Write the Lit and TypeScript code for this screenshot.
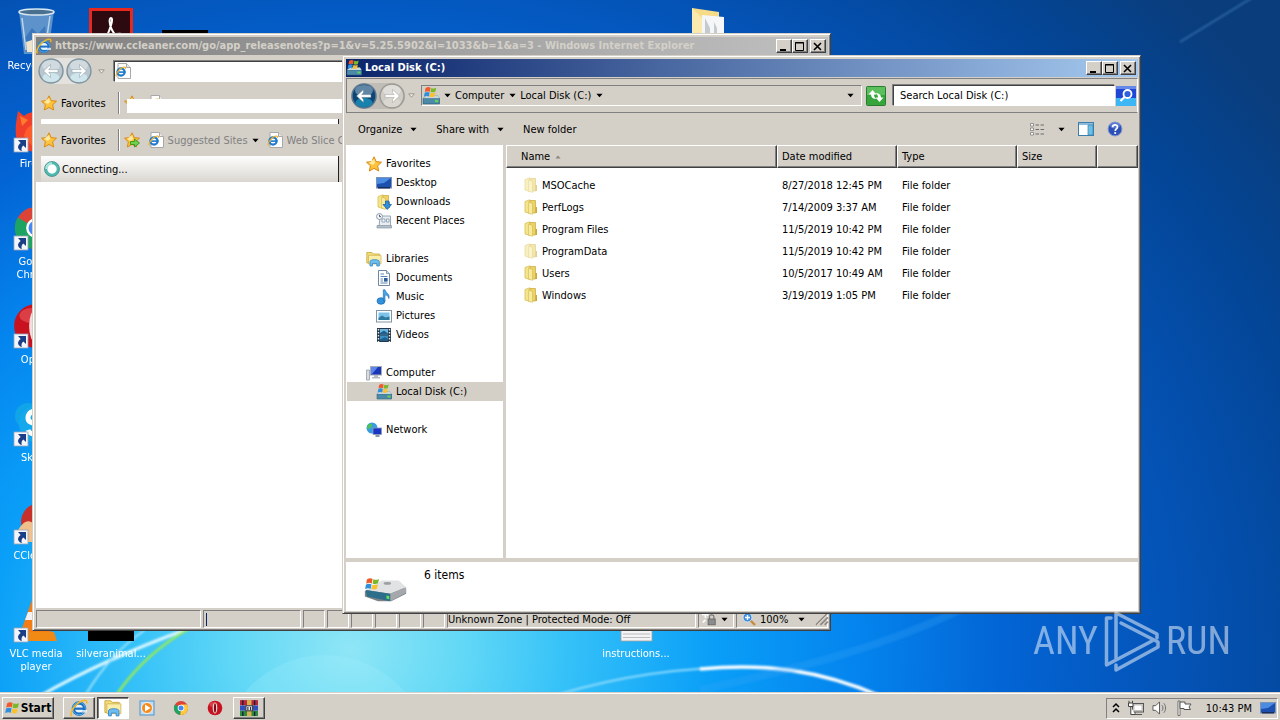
import { LitElement, html, css, svg, TemplateResult } from "lit";
import { customElement, property } from "lit/decorators.js";

/* ---------- icon library ---------- */

const flag = svg`
  <path d="M2 3.500C4 2 6 2 7.600 3L6.800 7.500C5.200 6.600 3.400 6.600 1.300 7.800Z" fill="#f0592a"/>
  <path d="M8.400 3.300C10.400 4.200 12.200 4 14 3L13 7.400C11.200 8.300 9.500 8.400 7.600 7.700Z" fill="#7ab829"/>
  <path d="M1.100 8.600C3.100 7.400 5 7.400 6.600 8.400L5.700 12.800C4.200 11.900 2.300 11.900 0.200 13Z" fill="#2f8fdd"/>
  <path d="M7.400 8.600C9.300 9.400 11 9.300 12.900 8.300L11.900 12.700C10.100 13.600 8.400 13.700 6.500 13Z" fill="#fbc02d"/>`;

const ie = svg`
  <circle cx="8" cy="8.500" r="5" fill="#e4f3fc" stroke="#1f6fc4" stroke-width="3"/>
  <circle cx="8" cy="8.500" r="5.600" fill="none" stroke="#58b8f0" stroke-width=".8"/>
  <rect x="4" y="7.600" width="9.500" height="2" fill="#1f6fc4"/>
  <path d="M9.500 9.800H15V12H9.500Z" fill="#fff" opacity=".7"/>
  <path d="M1.500 15.200C-1 13 4 4.500 10.500 1.800C13.500 .5 15.600 1 14.600 4" fill="none" stroke="#f4b824" stroke-width="1.400"/>`;

const pageIe = svg`
  <path d="M3 .5H11.500L15.500 4.500V15.500H3Z" fill="#fff" stroke="#a8a8a8"/>
  <path d="M11.500 .5V4.500H15.500" fill="#e8e8e8" stroke="#a8a8a8"/>
  <circle cx="6" cy="9" r="3.600" fill="none" stroke="#1f78cc" stroke-width="2.200"/>
  <rect x="4" y="8.300" width="6.500" height="1.600" fill="#1f78cc"/>
  <path d="M1.500 13.500C0 12 3.500 6 8 4.300C10 3.600 11 4.300 10.300 5.800" fill="none" stroke="#f0b020" stroke-width="1.200"/>`;

const star = svg`<path d="M8 .8L10.200 5.600L15.500 6.200L11.600 9.800L12.700 15L8 12.400L3.300 15L4.400 9.800L.5 6.200L5.800 5.600Z" fill="#fdc33c" stroke="#d98a16"/>
  <path d="M8 3L9.200 6.700L7 9L3 7Z" fill="#ffe9a0"/>`;

const folder = svg`
  <path d="M2 2.500L7 .8V14.500L2 13Z" fill="#f5e48c" stroke="#d8bf56" stroke-width=".8"/>
  <path d="M7 1.500H12.500V14H7Z" fill="#ecd264" stroke="#cdb048" stroke-width=".8"/>
  <path d="M5.500 3L9.500 4.500V15.300L5.500 14.300Z" fill="#f7ea9e" stroke="#d4ba50" stroke-width=".6"/>
  <path d="M12.500 8H14V14H12.500Z" fill="#c9a93c"/>`;

const disk = svg`
  <path d="M1 10L4 7.500H14L15.500 10V15H1Z" fill="#3f7f9e"/>
  <path d="M1 10H15.500V15H1Z" fill="#4d8aa8" stroke="#2f6480" stroke-width=".6"/>
  <path d="M4 7.500H14L15.500 10H1Z" fill="#c9d6dc"/>
  <rect x="11.500" y="11.500" width="3" height="2" fill="#5fd35a"/>
  <g transform="translate(1.500 -1.800) scale(.8)">${flag}</g>`;

const monitor = svg`
  <rect x=".5" y="2.500" width="15" height="10.500" fill="#1c4fae" stroke="#7c93b8"/>
  <path d="M1 3H15L8 8L1 9Z" fill="#4b8be2"/>
  <rect x="2" y="12" width="12" height="1.500" fill="#1c2e55"/>`;

const library = svg`
  <path d="M.8 1.500H6L7.500 3H13.500V12H.8Z" fill="#f3dc7a" stroke="#c9a73c" stroke-width=".8"/>
  <path d="M2.500 4.300H15V13H2.500Z" fill="#fbeea8" stroke="#d0b04c" stroke-width=".7"/>
  <path d="M4 15V10.500C4 8 13.300 8 13.300 10.500V15H10.800V12.500H6.500V15Z" fill="#6fbdf0" stroke="#3486c6" stroke-width=".8"/>`;

const chrome = svg`
  <circle cx="8" cy="8" r="7" fill="#db4437"/>
  <path d="M8 8L1.900 4.500A7 7 0 0 0 7.300 15Z" fill="#1da362"/>
  <path d="M8 8H15A7 7 0 0 1 7.300 15Z" fill="#fcca3f"/>
  <path d="M8 8L15 8A7 7 0 0 0 14 4.600H8Z" fill="#fcca3f"/>
  <circle cx="8" cy="8" r="3.300" fill="#fff"/><circle cx="8" cy="8" r="2.500" fill="#4587f3"/>`;

const opera = svg`
  <circle cx="8" cy="8" r="7.300" fill="#c81220"/>
  <ellipse cx="6.500" cy="4.500" rx="4" ry="2.500" fill="#ee6a6a" opacity=".5"/>
  <ellipse cx="8" cy="8" rx="2.300" ry="5.600" fill="#f4dede"/>
  <ellipse cx="8" cy="8" rx="1.100" ry="4.800" fill="#7a0a12"/>`;

const shortcut = svg`
  <rect x="2" y="32" width="14" height="14" fill="#f2f5fa" stroke="#9aa6b8" stroke-width=".8"/>
  <path d="M6 34H14V42L11.300 39.600C9.300 41 9.300 43 9.800 45C5.300 43.500 4.800 39.500 8.700 36.900Z" fill="#1b3f86"/>`;

const circleArrow = (fill: string, low: string, ring: string, dir: "l" | "r") => svg`
  <circle cx="13" cy="13" r="12" fill="${fill}" stroke="${ring}" stroke-width="1.500"/>
  <ellipse cx="13" cy="19.500" rx="8.500" ry="4.500" fill="${low}" opacity=".7"/>
  <ellipse cx="13" cy="7.500" rx="9" ry="5.500" fill="#fff" opacity=".35"/>
  <g transform="${dir === "r" ? "translate(26 0) scale(-1 1)" : ""}">
    <path d="M5.500 13L12.500 6.500V9.500L10.800 11.600H20V14.400H10.800L12.500 16.500V19.500Z" fill="#fff" stroke="${ring}" stroke-width=".5"/></g>`;

const I: Record<string, [string, TemplateResult]> = {
  flag: ["0 0 16 16", flag as any],
  ie: ["0 0 16 16", ie as any],
  pageIe: ["0 0 16 16", pageIe as any],
  star: ["0 0 16 16", star as any],
  starAdd: ["0 0 16 16", svg`${star}<path d="M6.500 9.500H10.500V7L15.500 11L10.500 15V12.500H6.500Z" fill="#6fd04a" stroke="#2b8a1c" stroke-width=".8"/>` as any],
  folder: ["0 0 16 16", folder as any],
  disk: ["0 0 16 16", disk as any],
  monitor: ["0 0 16 16", monitor as any],
  library: ["0 0 16 16", library as any],
  chrome: ["0 0 16 16", chrome as any],
  opera: ["0 0 16 16", opera as any],
  downloads: ["0 0 16 16", svg`${folder}<path d="M9.500 7H13V10.500H15.500L11.300 15.500L7 10.500H9.500Z" fill="#2f8fe0" stroke="#14599c" stroke-width=".7"/>` as any],
  recent: ["0 0 16 16", svg`
    <path d="M4 3H14.500V14.500H3Z" fill="#e8edf2" stroke="#8494a4" stroke-width=".8"/>
    <path d="M6 6H9V9H6ZM10.500 6H13V9H10.500Z" fill="#fff" stroke="#7d93a8" stroke-width=".8"/>
    <path d="M1 12.500H15.500V15H1Z" fill="#b4c0cc" stroke="#7b8a98" stroke-width=".6"/>
    <circle cx="3.500" cy="3.500" r="3" fill="#f4f8fb" stroke="#8494a4" stroke-width=".9"/><path d="M3.500 1.800V3.700H5" fill="none" stroke="#556"/>` as any],
  documents: ["0 0 16 16", svg`
    <path d="M2.500 .5H10.500L13.500 3.500V15.500H2.500Z" fill="#fff" stroke="#6f87a4"/>
    <path d="M10.500 .5V3.500H13.500" fill="#cfdcea" stroke="#6f87a4" stroke-width=".8"/>
    <path d="M4.500 4H8M4.500 6.500H11.500M4.500 9H7M4.500 11H7M4.500 13H11.500" stroke="#5d86b8"/>
    <rect x="8" y="8" width="3.600" height="3.600" fill="#2c5c9c"/>` as any],
  music: ["0 0 16 16", svg`
    <ellipse cx="5" cy="12" rx="4" ry="3.300" fill="#2f93dd" stroke="#1b66a8" stroke-width=".7"/>
    <path d="M7.300 12V.8H9C9.500 4 14.500 4.800 12.800 9.500C12.500 6.800 10.500 6 9 5.800V12Z" fill="#47a6e8" stroke="#1b66a8" stroke-width=".6"/>` as any],
  pictures: ["0 0 16 16", svg`
    <rect x=".5" y="2.500" width="15" height="11.500" fill="#fff" stroke="#7f95aa"/>
    <rect x="2.500" y="4.500" width="11" height="7.500" fill="#7cc3ea"/><path d="M2.500 10L6 7.500L9.500 9.500L13.500 8.500V12H2.500Z" fill="#2f7ba0"/>` as any],
  videos: ["0 0 16 16", svg`
    <rect x="1" y="1" width="14" height="14" fill="#26394a"/><rect x="4" y="2" width="8" height="5.500" fill="#6db6e2"/><rect x="4" y="8.500" width="8" height="5.500" fill="#3e8fc4"/>
    <path d="M4 6L8 3.500L12 6.500V7.500H4ZM4 12.500L9 10L12 12V14H4Z" fill="#1f5f8c"/>
    <path d="M2.500 2V15M13.500 2V15" stroke="#e6eef4" stroke-width="1.400" stroke-dasharray="1.500 1.500"/>` as any],
  computer: ["0 0 16 16", svg`
    <path d="M.5 5H3.500V15H.5Z" fill="#d9dde2" stroke="#8a929c" stroke-width=".7"/>
    <rect x="4.500" y="1.500" width="11" height="8.500" fill="#1c36b8" stroke="#a3acb8"/><path d="M5 2H12L6 9H5Z" fill="#5c86ec"/>
    <path d="M8 10H12V12H14V13.500H6V12H8Z" fill="#b4bac2"/>` as any],
  network: ["0 0 16 16", svg`
    <circle cx="6" cy="6" r="5.500" fill="#3a9be0"/><path d="M3 2C6 1 7 3 5.500 5C4 7 2.500 7 1 6C1 4 2 2.500 3 2ZM8 7L11 6L10 10L7 11Z" fill="#4fc25a"/>
    <rect x="7" y="6" width="8.500" height="6.500" fill="#1a35c4" stroke="#8d9cc0" stroke-width=".8"/><path d="M9.500 12.500H13.500V15H9.500Z" fill="#8c96a4"/>` as any],
  wmp: ["0 0 16 16", svg`
    <rect x="1" y="1" width="14" height="14" fill="#bcdcf4" stroke="#4f94cc"/><circle cx="8" cy="8" r="5.500" fill="#f58a1c" stroke="#fff" stroke-width=".8"/><path d="M6 4.500L11.500 8L6 11.500Z" fill="#fff"/>` as any],
  rar: ["0 0 16 16", svg`
    <rect x="0" y="1" width="16" height="4.600" fill="#b8283c"/><rect x="0" y="5.800" width="16" height="4.600" fill="#3050c0"/><rect x="0" y="10.600" width="16" height="4.600" fill="#2c8c3c"/>
    <path d="M2.500 1V5.600M13 1V5.600M2.500 11V15M13 11V15" stroke="#1c1c38" stroke-width="1.200"/><rect x="6.200" y="1" width="4" height="14.200" fill="#d8b050"/><rect x="5.200" y="6" width="6" height="4.500" fill="#e8e8e8" stroke="#444"/><path d="M7 7V10M9.400 7V10" stroke="#333"/>` as any],
  spinner: ["0 0 16 16", svg`<circle cx="8" cy="8" r="6" fill="#fff" stroke="#4fb9ae" stroke-width="2.600"/><path d="M2 8A6 6 0 0 1 8 2" fill="none" stroke="#a5e6dc" stroke-width="2.600"/><circle cx="8" cy="8" r="7.500" fill="none" stroke="#1c7c78" stroke-width=".7"/>` as any],
  down: ["0 0 8 5", svg`<path d="M.5 .5H7.500L4 4.500Z" fill="#000"/>` as any],
  downSoft: ["0 0 8 5", svg`<path d="M.8 .6H7.200L4 4.400Z" fill="#f4f2ee" stroke="#908c84"/>` as any],
  sort: ["0 0 8 5", svg`<path d="M.5 4.500H7.500L4 .5Z" fill="#8c8880"/>` as any],
  refresh: ["0 0 20 20", svg`
    <rect x=".5" y=".5" width="19" height="19" rx="1" fill="#35a53c" stroke="#2a7d30"/><path d="M1 1H19V9H1Z" fill="#6cca6c" opacity=".7"/>
    <path d="M2.500 8.500L6.500 4L10.500 8.500H8C8 11 9 12 10.500 13C7 13 5 11.500 5 8.500ZM17.500 11.500L13.500 16L9.500 11.500H12C12 9 11 8 9.500 7C13 7 15 8.500 15 11.500Z" fill="#fff"/>` as any],
  search: ["0 0 20 20", svg`
    <rect width="20" height="20" fill="#1f46d4"/><path d="M0 12H20V20H0Z" fill="#3cb6f4"/><path d="M0 0H20V3H0Z" fill="#6688e8"/>
    <circle cx="11.500" cy="8" r="4" fill="#2d62dc" stroke="#fff" stroke-width="1.800"/><path d="M8.500 11L4.500 15" stroke="#fff" stroke-width="2.200"/>` as any],
  views: ["0 0 16 16", svg`
    <path d="M1.500 2.500H4.500V5H1.500ZM1.500 7H4.500V9.500H1.500ZM1.500 11.500H4.500V14H1.500Z" fill="#fff" stroke="#7c7c7c" stroke-width=".8"/>
    <path d="M6.500 4H10M11.500 4H15M6.500 8.500H10M11.500 8.500H15M6.500 13H10M11.500 13H15" stroke="#6c6c6c"/>` as any],
  pane: ["0 0 16 16", svg`<rect x=".5" y="1.500" width="15" height="13" fill="#fff" stroke="#3b7fae"/><path d="M1 2H15V4H1Z" fill="#8cbcd8"/><path d="M10 4H15V14H10Z" fill="#6cc0e6" stroke="#3b7fae" stroke-width=".7"/>` as any],
  zoomer: ["0 0 14 14", svg`<path d="M8 8L13 13" stroke="#c88c3c" stroke-width="2.400"/><circle cx="5.500" cy="5.500" r="4.500" fill="#3c8ce0" stroke="#d4e4f4"/><path d="M5.500 3V8M3 5.500H8" stroke="#fff" stroke-width="1.400"/>` as any],
  lock: ["0 0 18 16", svg`<path d="M1 3H5V7M5 9L2 12M6 2L8 4" stroke="#fff" stroke-width="1.800" fill="none"/><path d="M9.500 8V5.500C9.500 2.500 14.500 2.500 14.500 5.500V8" fill="none" stroke="#777" stroke-width="1.400"/><rect x="8" y="8" width="8" height="6.500" fill="#8c8c8c" stroke="#666"/>` as any],
  chevrons: ["0 0 8 12", svg`<path d="M1 5L4 2L7 5M1 10L4 7L7 10" fill="none" stroke="#000" stroke-width="1.500"/>` as any],
  net: ["0 0 16 16", svg`<rect x="4.500" y="3.500" width="11" height="8.500" fill="#d8d4cc" stroke="#555"/><rect x="6" y="5" width="8" height="5.500" fill="#fff" stroke="#999" stroke-width=".6"/><path d="M7 12V14.500H14" stroke="#555" fill="none"/><path d="M1 .8V3M4.500 .8V3M.5 3H5V6.500H.5ZM2.800 6.500V14.500H7" stroke="#444" fill="#fff"/>` as any],
  volume: ["0 0 17 16", svg`<path d="M1 5.500H4L8 1.500V14.500L4 10.500H1Z" fill="#fff" stroke="#555"/><path d="M10.500 5C12 6.500 12 9.500 10.500 11M12.500 3C15 5.500 15 10.500 12.500 13" fill="none" stroke="#666"/>` as any],
  action: ["0 0 16 16", svg`<path d="M2 1H4V15.500H2Z" fill="#fff" stroke="#555" stroke-width=".8"/><path d="M4 2H9V4H15L13 7L14.500 9.500H8V8.500H4Z" fill="#fff" stroke="#555"/>` as any],
  help: ["0 0 16 16", svg`<circle cx="8" cy="8" r="7" fill="#2c50b8" stroke="#8c9cd0"/><ellipse cx="8" cy="4.500" rx="5" ry="3" fill="#7c98e4" opacity=".6"/><path d="M5.600 6.200C5.600 3 10.600 3 10.400 6.200C10.300 8 8.200 8 8.200 10" fill="none" stroke="#fff" stroke-width="1.700"/><circle cx="8.200" cy="12" r="1.100" fill="#fff"/>` as any],
  min: ["0 0 10 9", svg`<path d="M1 7H7V9H1Z" fill="#000"/>` as any],
  max: ["0 0 10 9", svg`<path d="M.5 .5H8.500V8.500H.5ZM0 1H9" fill="none" stroke="#000"/>` as any],
  close: ["0 0 10 9", svg`<path d="M1 1L8 8M8 1L1 8" stroke="#000" stroke-width="1.600"/>` as any],
  grip: ["0 0 13 13", svg`<path d="M12 1L1 12M12 5L5 12M12 9L9 12" stroke="#8c8880" stroke-width="1.500"/><path d="M13 1L2 12" stroke="#fff" stroke-width=".5"/>` as any],
  backIdle: ["0 0 26 26", circleArrow("#b9c6ce", "#d8f2fa", "#7f959f", "l") as any],
  fwdIdle: ["0 0 26 26", circleArrow("#b9c6ce", "#d8f2fa", "#7f959f", "r") as any],
  back: ["0 0 26 26", circleArrow("#0d4576", "#1c9cc4", "#5c7890", "l") as any],
  fwdOff: ["0 0 26 26", circleArrow("#cfccc6", "#dedbd6", "#9c9a94", "r") as any],
  drive: ["0 0 48 34", svg`
    <path d="M2 19L20 11H38L46 17V22L30 30H16L2 25Z" fill="#7d8286"/>
    <path d="M3 18L20 8H38L46 15L29 22Z" fill="#e0e2e4"/><path d="M29 22L46 15V21L29 30Z" fill="#a4a8ac"/>
    <path d="M3 18L29 22V30L4 25Z" fill="#2d6f8a"/><path d="M25 24L28 24.500V28L25 27.500Z" fill="#5fe05a"/><ellipse cx="26" cy="11" rx="4" ry="1.500" fill="#9aa0a4"/>
    <g transform="translate(2 3) scale(1.080)">${flag}</g>` as any],
  /* desktop pictures, 48 x 48 */
  bin: ["0 0 48 48", svg`
    <path d="M7 3L12 46H36L42 3Z" fill="#8db4d4" opacity=".65"/><ellipse cx="24.500" cy="4" rx="17.500" ry="3" fill="#4a7090" stroke="#d8e8f2" stroke-width="1.500"/>
    <path d="M13 30L20 20L26 26L33 18L36 44H14Z" fill="#2d68b4" opacity=".65"/><path d="M10 10L14 42M38 8L33 42" stroke="#e4f0f8" stroke-width="1.500" opacity=".7"/>
    <path d="M14 34L20 32L22 44H15Z" fill="#f0e4cc"/>` as any],
  firefox: ["0 0 48 48", svg`<path d="M4 30C3 18 5 12 6 5L12 10C16 6 22 6 26 5L44 16V40L26 46C14 46 5 40 4 30Z" fill="#f0402c"/><path d="M12 30C14 18 24 16 34 20V40H20Z" fill="#ff5c2c"/><path d="M8 10L16 14L10 20Z" fill="#ff7c2c"/>${shortcut}` as any],
  bigChrome: ["0 0 48 48", svg`<g transform="scale(3)">${chrome}</g>${shortcut}` as any],
  bigOpera: ["0 0 48 48", svg`<g transform="scale(3)">${opera}</g>${shortcut}` as any],
  skype: ["0 0 48 48", svg`<circle cx="16" cy="16" r="13" fill="#10a4e8"/><circle cx="26" cy="24" r="19" fill="#14a8ec"/><path d="M31 14C26 8 16 11 16 18C16 26 31 22 31 29C31 36 18 36 16 30" fill="none" stroke="#fff" stroke-width="5"/>${shortcut}` as any],
  ccleaner: ["0 0 48 48", svg`<circle cx="28" cy="24" r="19" fill="#c8302c"/><circle cx="30" cy="24" r="10" fill="#90c8e8"/><path d="M4 36C10 24 16 20 22 26L26 44H8Z" fill="#f0c08c"/>${shortcut}` as any],
  vlc: ["0 0 48 48", svg`<path d="M20 4H28L40 38H8Z" fill="#f47c14"/><path d="M16 16H32L35 24H13Z" fill="#f2f2f2"/><path d="M6 36H42L45 45H3Z" fill="#f08a14"/>${shortcut}` as any],
  acrobat: ["0 0 48 48", svg`<rect x="3.500" y="1.500" width="41" height="44" fill="#2c0a10" stroke="#e8281c" stroke-width="3"/><path d="M24 10C22 10 22 16 25 22C29 30 36 30 36 27C36 24 16 27 13 33C12 36 18 34 22 23C25 15 26 10 24 10Z" fill="none" stroke="#fff" stroke-width="2"/>` as any],
  black: ["0 0 48 48", svg`<rect x="1" y="22" width="46" height="23" fill="#000"/>` as any],
  bigFolder: ["0 0 48 48", svg`<path d="M8 0L35 4V46H8Z" fill="#f6dc88"/><path d="M8 0L18 10V46H8Z" fill="#fbeab0"/><path d="M18 7L40 9V46H18Z" fill="#f4f6f8"/><path d="M21 10L26 20V46H21ZM30 14L33 20V46H30Z" fill="#c4cad0"/>` as any],
  paper: ["0 0 48 48", svg`<rect x="9" y="4" width="31" height="41" fill="#f4f4f4" stroke="#a0a0a0" stroke-width=".8"/><path d="M11 38H38M11 41.500H38" stroke="#b8bcc4"/>` as any],
};

const icon = (name: string, cls = "i16") =>
  html`<svg class=${cls} viewBox=${I[name][0]} aria-hidden="true">${I[name][1]}</svg>`;

const base = css`
  :host {
    display: block;
    font-family: "DejaVu Sans Condensed", "DejaVu Sans", sans-serif;
    font-size: 11px;
    line-height: 15px;
    color: #000;
  }
  * { box-sizing: border-box; }
  svg { display: block; flex: none; }
  button, input { font: inherit; color: inherit; margin: 0; }
  button, .link {
    display: flex; align-items: center; gap: 8px;
    background: none; border: 0; padding: 0; white-space: nowrap;
    color: inherit; text-decoration: none;
  }
  .i16 { width: 16px; height: 16px; }
  .i14 { width: 14px; height: 14px; }
  .i20 { width: 20px; height: 20px; }
  .i26 { width: 26px; height: 26px; }
  .arrow { width: 7px; height: 5px; }
`;

/* ---------- window frame ---------- */

@customElement("win-frame")
class WinFrame extends LitElement {
  @property() title = "";
  @property() icon = "ie";
  @property({ type: Boolean, reflect: true }) active = false;
  static styles = [base, css`
    :host {
      display: flex; flex-direction: column; background: #d4d0c8; padding: 3px 2px 2px 3px;
      border: 1px solid; border-color: #d4d0c8 #404040 #404040 #d4d0c8;
      box-shadow: inset 1px 1px #fff, inset -1px -1px #808080;
    }
    header {
      flex: none; display: flex; align-items: center; height: 18px; padding-right: 2px;
      background: linear-gradient(90deg, #808080, #c0c0c0); color: #d4d0c8; font-weight: bold;
    }
    :host([active]) header { background: linear-gradient(90deg, #0a246a, #a6caf0); color: #fff; }
    h1 { font-size: 11px; line-height: 18px; margin: 0 0 0 3px; flex: 1; min-width: 0; overflow: hidden; white-space: nowrap; }
    .cap {
      width: 16px; height: 14px; justify-content: center; background: #d4d0c8; color: #000;
      border: 1px solid; border-color: #fff #404040 #404040 #fff; box-shadow: inset -1px -1px #808080;
    }
    .cap svg { width: 10px; height: 9px; }
    .close { margin-left: 2px; }
  `];
  render() {
    return html`<header>
        ${icon(this.icon)}<h1>${this.title}</h1>
        <button class="cap" aria-label="Minimize">${icon("min")}</button>
        <button class="cap" aria-label="Maximize">${icon("max")}</button>
        <button class="cap close" aria-label="Close">${icon("close")}</button>
      </header><slot></slot>`;
  }
}

/* ---------- browser ---------- */

@customElement("browser-window")
class BrowserWindow extends LitElement {
  static styles = [base, css`
    :host { display: flex; }
    win-frame { flex: 1; min-width: 0; }
    .nav { display: flex; align-items: center; gap: 2px; height: 32px; padding: 0 2px; }
    .nav .arrow { margin: 0 7px 0 4px; }
    .pill { display: flex; gap: 2px; border-radius: 14px; background: #e4e2de; }
    .addr { flex: 1; display: flex; align-items: center; height: 21px; background: #fff; border: 1px solid; border-color: #404040 #fff #fff #404040; box-shadow: -1px -1px #808080; }
    .addr input { flex: 1; border: 0; background: none; outline: 0; }
    .bar { position: relative; display: flex; align-items: center; height: 32px; padding: 0 5px; gap: 5px; }
    .bar button { gap: 4px; }
    .sep { width: 1px; height: 22px; background: #808080; box-shadow: 1px 0 #fff; margin-left: 7px; }
    .bar .link { gap: 4px; color: #808080; margin-left: 3px; }
    .cover { position: absolute; left: 91px; right: 0; top: 12px; height: 14px; background: #fff; }
    .strip { height: 5px; margin: 0 0 0 5px; width: 298px; background: #fff; border-right: 1px solid #202020; }
    .tab { margin: 0 0 0 5px; width: 298px; height: 26px; gap: 2px; padding-left: 3px; background: linear-gradient(#fdfdfd, #dad7d1); border-right: 1px solid #202020; }
    .page { flex: 1; background: #fff; }
    .status { display: flex; gap: 2px; height: 20px; padding: 2px 0 0; }
    .cell { width: 22px; height: 18px; border: 1px solid; border-color: #808080 #fff #fff #808080; display: flex; align-items: center; gap: 4px; white-space: nowrap; }
    .c1 { width: 165px; } .c2 { width: 98px; padding-left: 2px; } .c2 i { width: 1px; height: 13px; background: #0a246a; }
    .zone { flex: 1; } .prot { width: 36px; padding-left: 2px; } .zoom { width: 92px; padding-left: 5px; }
    .zoom .arrow { margin: 0 6px; }
  `];
  favs(covered: boolean) {
    return html`<div class="bar">
      <button>${icon("star")}<span>Favorites</span></button>
      <span class="sep"></span>${icon("starAdd")}
      ${covered
        ? html`<span class="link">${icon("pageIe")}</span><span class="cover"></span>`
        : html`<a class="link" href="#">${icon("pageIe")}Suggested Sites${icon("down", "arrow")}</a>
               <a class="link" href="#">${icon("pageIe")}Web Slice Gallery</a>`}
    </div>`;
  }
  render() {
    return html`<win-frame icon="ie" title="https://www.ccleaner.com/go/app_releasenotes?p=1&v=5.25.5902&l=1033&b=1&a=3 - Windows Internet Explorer">
      <div class="nav">
        <span class="pill"><button aria-label="Back">${icon("backIdle", "i26")}</button><button aria-label="Forward">${icon("fwdIdle", "i26")}</button></span>
        ${icon("downSoft", "arrow")}
        <div class="addr">${icon("pageIe")}<input aria-label="Address"></div>
      </div>
      ${this.favs(true)}
      <div class="strip"></div>
      ${this.favs(false)}
      <button class="tab">${icon("spinner")}Connecting...</button>
      <div class="page"></div>
      <div class="status">
        <div class="cell c1"></div><div class="cell c2"><i></i></div>
        ${[1, 2, 3, 4, 5, 6].map(() => html`<div class="cell"></div>`)}
        <div class="cell zone">Unknown Zone | Protected Mode: Off</div>
        <div class="cell prot">${icon("lock")}${icon("down", "arrow")}</div>
        <div class="cell zoom">${icon("zoomer", "i14")}100%${icon("down", "arrow")}${icon("grip", "i14")}</div>
      </div>
    </win-frame>`;
  }
}

/* ---------- file explorer ---------- */

const TREE: [string, string, [string, string][]][] = [
  ["star", "Favorites", [["monitor", "Desktop"], ["downloads", "Downloads"], ["recent", "Recent Places"]]],
  ["library", "Libraries", [["documents", "Documents"], ["music", "Music"], ["pictures", "Pictures"], ["videos", "Videos"]]],
  ["computer", "Computer", [["disk", "Local Disk (C:)"]]],
  ["network", "Network", []],
];

const FILES: [string, string, boolean][] = [
  ["MSOCache", "8/27/2018 12:45 PM", true],
  ["PerfLogs", "7/14/2009 3:37 AM", false],
  ["Program Files", "11/5/2019 10:42 PM", false],
  ["ProgramData", "11/5/2019 10:42 PM", true],
  ["Users", "10/5/2017 10:49 AM", false],
  ["Windows", "3/19/2019 1:05 PM", false],
];

@customElement("explorer-window")
class ExplorerWindow extends LitElement {
  static styles = [base, css`
    :host { display: flex; }
    win-frame { flex: 1; min-width: 0; }
    .nav { display: flex; align-items: center; height: 35px; margin-top: 1px; padding: 0 0 0 4px; border: 1px solid; border-color: #808080 #fff #808080 #808080; }
    .pill { display: flex; gap: 2px; border-radius: 14px; background: #c0bdb6; }
    .nav > .arrow { margin: 0 6px 0 3px; }
    .path { flex: 1; display: flex; align-items: center; gap: 4px; height: 21px; padding-right: 7px; border: 1px solid; border-color: #808080 #fff #fff #808080; }
    .path button { gap: 5px; }
    .path .grow { flex: 1; }
    .path .drop { width: 7px; }
    .path > .i16 { width: 18px; height: 18px; }
    .go { margin: 0 7px 0 4px; }
    .search { width: 222px; height: 21px; background: #fff; padding: 0 6px; border: 1px solid; border-color: #404040 #fff #fff #404040; outline: 0; box-shadow: -1px -1px #808080; border-radius: 0; }
    .search::placeholder { color: #000; opacity: 1; }
    .find { margin: 0 1px; }
    .cmds { display: flex; align-items: center; height: 32px; padding: 0 15px 0 12px; gap: 19px; }
    .cmds .grow { flex: 1; }
    .cmds button { gap: 8px; }
    .cmds .tools { display: flex; align-items: center; gap: 13px; }
    .main { flex: 1; min-height: 0; display: flex; gap: 3px; }
    nav { width: 157px; background: #fff; padding: 9px 0 0 1px; overflow: hidden; }
    nav section { margin-bottom: 19px; }
    nav .link { height: 19px; padding-left: 19px; gap: 4px; }
    nav .sub { padding-left: 29px; }
    nav .on { background: #d4d0c8; }
    .list { flex: 1; min-width: 0; background: #fff; }
    table { width: 100%; table-layout: fixed; border-collapse: separate; border-spacing: 0; }
    th { height: 23px; padding: 0 4px; font-weight: normal; text-align: left; background: #d4d0c8; border: 1px solid; border-color: #fff #404040 #404040 #fff; box-shadow: inset -1px -1px #808080; }
    th:first-child { padding-left: 14px; }
    th span { display: flex; align-items: center; gap: 5px; }
    th .sort { width: 6px; height: 4px; }
    td { height: 22px; padding: 0 5px; white-space: nowrap; }
    td:first-child { padding-left: 17px; }
    td span { display: flex; align-items: center; gap: 3px; }
    .faded { opacity: .55; }
    tbody::before { content: ""; display: block; height: 6px; }
    .w120 { width: 120px; } .w80 { width: 80px; } .w40 { width: 41px; }
    footer { display: flex; gap: 16px; height: 53px; border-top: 4px solid #d4d0c8; background: #fff; padding: 5px 17px; font-size: 12px; line-height: 16px; }
    .drive { width: 45px; height: 34px; margin-top: 5px; }
  `];
  render() {
    return html`<win-frame active icon="disk" title="Local Disk (C:)">
      <div class="nav">
        <span class="pill"><button aria-label="Back">${icon("back", "i26")}</button><button aria-label="Forward">${icon("fwdOff", "i26")}</button></span>
        ${icon("downSoft", "arrow")}
        <div class="path">
          ${icon("disk")}${icon("down", "arrow")}
          <button>Computer${icon("down", "arrow")}</button>
          <button>Local Disk (C:)${icon("down", "arrow")}</button>
          <span class="grow"></span>
          <button class="drop" aria-label="Previous locations">${icon("down", "arrow")}</button>
        </div>
        <button class="go" aria-label="Refresh">${icon("refresh", "i20")}</button>
        <input class="search" aria-label="Search" placeholder="Search Local Disk (C:)">
        <button class="find" aria-label="Find">${icon("search", "i20")}</button>
      </div>
      <div class="cmds">
        <button>Organize${icon("down", "arrow")}</button>
        <button>Share with${icon("down", "arrow")}</button>
        <button>New folder</button>
        <span class="grow"></span>
        <div class="tools">
          <button aria-label="Views">${icon("views")}</button>
          <button aria-label="More views">${icon("down", "arrow")}</button>
          <button aria-label="Preview pane">${icon("pane")}</button>
          <button aria-label="Help">${icon("help")}</button>
        </div>
      </div>
      <div class="main">
        <nav>
          ${TREE.map(([i, t, kids]) => html`<section>
            <a class="link" href="#">${icon(i)}${t}</a>
            ${kids.map(([ki, kt]) => html`<a class="link sub ${ki === "disk" ? "on" : ""}" href="#">${icon(ki)}${kt}</a>`)}
          </section>`)}
        </nav>
        <div class="list">
          <table>
            <thead><tr>
              <th><span>Name ${icon("sort", "sort")}</span></th>
              <th class="w120">Date modified</th><th class="w120">Type</th><th class="w80">Size</th><th class="w40"></th>
            </tr></thead>
            <tbody>
              ${FILES.map(([n, d, faded]) => html`<tr>
                <td><span>${icon("folder", faded ? "i16 faded" : "i16")}${n}</span></td>
                <td>${d}</td><td>File folder</td><td></td><td></td></tr>`)}
            </tbody>
          </table>
        </div>
      </div>
      <footer>${icon("drive", "drive")}<span>6 items</span></footer>
    </win-frame>`;
  }
}

/* ---------- desktop ---------- */

const SHORTCUTS: [string, string][] = [
  ["bin", "Recycle Bin"], ["firefox", "Firefox"], ["bigChrome", "Google Chrome"],
  ["bigOpera", "Opera"], ["skype", "Skype"], ["ccleaner", "CCleaner"], ["vlc", "VLC media player"],
];

@customElement("app-root")
class AppRoot extends LitElement {
  static styles = [base, css`
    :host { display: flex; flex-direction: column; height: 100vh; overflow: hidden; }
    .desk { position: relative; flex: 1; min-height: 0; overflow: hidden; }
    .wall { position: absolute; inset: 0; width: 100%; height: 100%; }
    .item { display: flex; flex-direction: column; align-items: center; gap: 3px; width: 72px; height: 98px; color: #fff; text-align: center; line-height: 13px; text-decoration: none; }
    .item svg { width: 48px; height: 48px; }
    .icons { position: absolute; left: 0; top: 8px; }
    .free { position: absolute; }
    .f1 { left: 75px; top: 8px; } .f2 { left: 149px; top: 8px; } .f3 { left: 75px; top: 596px; }
    .f4 { left: 672px; top: 8px; } .f5 { left: 600px; top: 596px; }
    browser-window { position: absolute; left: 32px; right: 449px; top: 33px; bottom: 61px; }
    explorer-window { position: absolute; left: 342px; right: 139px; top: 55px; bottom: 78px; }
    .mark { position: absolute; right: 49px; bottom: 20px; display: flex; align-items: center; gap: 6px; color: #fff; opacity: .5; font: 38px/62px "Liberation Sans Narrow", "Roboto Condensed", "Liberation Sans", sans-serif; }
    .mark svg { width: 56px; height: 62px; }
    .task { flex: none; display: flex; align-items: center; height: 28px; padding: 3px 2px 0; border-top: 1px solid #d4d0c8; box-shadow: inset 0 1px #fff; background: #d4d0c8; }
    .btn { height: 22px; justify-content: center; border: 1px solid; border-color: #fff #404040 #404040 #fff; box-shadow: inset -1px -1px #808080; }
    .start { width: 52px; gap: 0; font-weight: bold; font-size: 12px; margin-right: 9px; }
    .app { width: 32px; margin-right: 2px; }
    .flat { width: 32px; height: 22px; justify-content: center; margin-right: 2px; }
    .down { background: #fff; border-color: #404040 #fff #fff #404040; box-shadow: inset 1px 1px #808080; }
    .app svg { width: 18px; height: 18px; }
    .tray { margin-left: auto; display: flex; align-items: center; gap: 8px; height: 21px; padding: 0 1px 0 5px; border: 1px solid; border-color: #808080 #fff #fff #808080; }
    .chev { width: 8px; height: 12px; }
    .clock { margin: 0 0 0 6px; }
  `];
  render() {
    return html`<div class="desk">
      <svg class="wall" viewBox="0 0 1280 692" preserveAspectRatio="none" aria-hidden="true">
        <defs>
          <radialGradient id="g" gradientUnits="userSpaceOnUse" cx="350" cy="650" r="1130" gradientTransform="translate(0 97) scale(1 .85)">
            <stop offset="0" stop-color="#8fe6f6"/><stop offset=".1" stop-color="#62d8f6"/><stop offset=".19" stop-color="#36c2f8"/>
            <stop offset=".32" stop-color="#0a9ff8"/><stop offset=".45" stop-color="#0484ee"/><stop offset=".58" stop-color="#0364d4"/>
            <stop offset=".72" stop-color="#0454b8"/><stop offset=".88" stop-color="#034596"/><stop offset="1" stop-color="#0a3d7c"/>
          </radialGradient>
          <filter id="b"><feGaussianBlur stdDeviation="1"/></filter>
        </defs>
        <rect width="1280" height="692" fill="url(#g)"/>
        <ellipse cx="325" cy="760" rx="105" ry="105" fill="#a8f0fa" opacity=".22"/>
        <g fill="none" filter="url(#b)">
          <path d="M40 696C85 670 130 650 190 628" stroke="#dcf8ff" stroke-width="3"/>
          <path d="M86 694C102 668 122 645 145 630" stroke="#9fe4fa" stroke-width="2"/>
          <path d="M117 694C135 668 158 646 190 628" stroke="#9aec50" stroke-width="2.500"/>
          <path d="M560 694C620 676 680 667 750 667" stroke="#8fdcfc" stroke-width="2"/>
          <path d="M700 669C765 663 820 670 880 696" stroke="#fff" stroke-width="3.500"/>
          <path d="M1180 42L1255 -4" stroke="#4a86c0" stroke-width="2" opacity=".6"/>
          <path d="M700 690C800 668 880 648 960 610" stroke="#3fa8f8" stroke-width="8" opacity=".25"/>
        </g>
      </svg>
      <div class="icons">${SHORTCUTS.map(([i, t]) => html`<a class="item" href="#">${icon(i)}<span>${t}</span></a>`)}</div>
      <a class="item free f1" href="#" aria-label="Acrobat">${icon("acrobat")}</a>
      <a class="item free f2" href="#" aria-label="File">${icon("black")}</a>
      <a class="item free f3" href="#">${icon("black")}<span>silveranimal...</span></a>
      <a class="item free f4" href="#" aria-label="Folder">${icon("bigFolder")}</a>
      <a class="item free f5" href="#">${icon("paper")}<span>instructions...</span></a>
      <browser-window></browser-window>
      <explorer-window></explorer-window>
      <div class="mark"><span>ANY</span>
        <svg viewBox="0 0 56 62" fill="none" stroke="#fff" stroke-width="3.500" stroke-linejoin="round" stroke-linecap="round" aria-hidden="true">
          <path d="M7 8H2.500V55L48 31"/><path d="M12 48V3L53 24V28"/><path d="M12 55V60L54 37V32L17 13"/>
        </svg><span>RUN</span></div>
    </div>
    <div class="task">
      <button class="btn start">${icon("flag")}Start</button>
      <button class="btn app" aria-label="Internet Explorer">${icon("ie")}</button>
      <button class="btn app down" aria-label="Explorer">${icon("library")}</button>
      <button class="flat" aria-label="Media Player">${icon("wmp")}</button>
      <button class="flat" aria-label="Chrome">${icon("chrome")}</button>
      <button class="flat" aria-label="Opera">${icon("opera")}</button>
      <button class="btn app" aria-label="WinRAR">${icon("rar")}</button>
      <div class="tray">${icon("chevrons", "chev")}${icon("net")}${icon("volume")}${icon("action")}<span class="clock">10:43 PM</span>${icon("monitor")}</div>
    </div>`;
  }
}
